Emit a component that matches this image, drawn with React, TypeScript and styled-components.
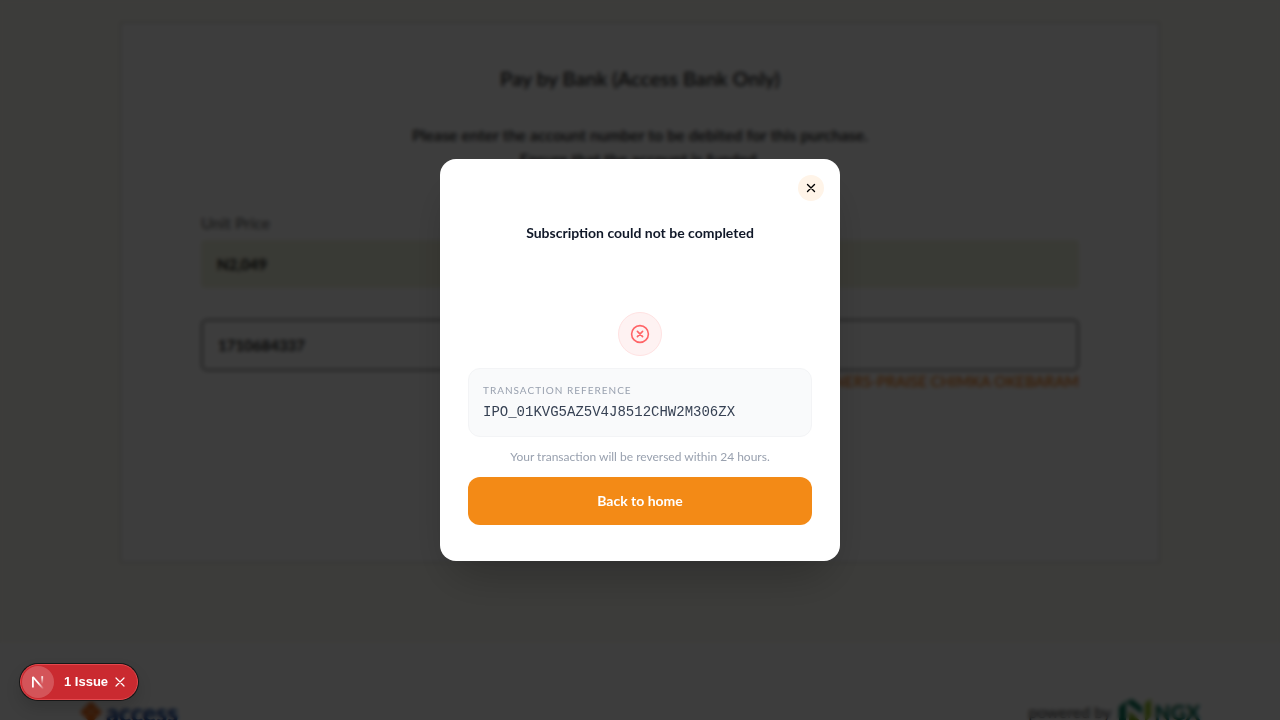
import React from "react";
import styled, { createGlobalStyle } from "styled-components";

const GlobalStyle = createGlobalStyle`
  * { box-sizing: border-box; }
  body {
    margin: 0;
    overflow: hidden;
    background: #fff;
    color: #101828;
    font-family: "Lato", "Liberation Sans", sans-serif;
  }
  button, input { font-family: inherit; }
  h1, h2, p { margin: 0; }
`;

const Main = styled.main`
  background: #fbfaf2;
  padding: 22px 120px 80px;
`;

const PayCard = styled.section`
  min-height: 541px;
  padding: 40px 80px;
  background: #fff;
  border: 1px solid #c6c5bd;
`;

const PayTitle = styled.h1`
  margin-bottom: 30px;
  font-size: 20px;
  line-height: 30px;
  font-weight: 600;
  text-align: center;
  color: #222;
`;

const Lead = styled.p`
  margin-bottom: 40px;
  font-size: 16px;
  line-height: 24px;
  font-weight: 600;
  text-align: center;
  color: #222;
`;

const Form = styled.form`
  display: flex;
  flex-direction: column;
`;

const Label = styled.label`
  font-size: 16px;
  line-height: 24px;
  color: #555;
  margin-bottom: 5px;
`;

const PriceInput = styled.input`
  width: 100%;
  height: 48px;
  padding: 0 16px;
  border: 0;
  border-radius: 4px;
  background: #eff1dc;
  font-size: 15px;
  font-weight: 700;
  color: #111;
  margin-bottom: 31px;
`;

const AccountInput = styled.input`
  width: 100%;
  height: 52px;
  padding: 0 15px;
  border: 2px solid #888;
  border-radius: 6px;
  background: #fff;
  font-size: 15px;
  font-weight: 700;
  color: #222;
`;

const AccountName = styled.p`
  font-size: 15px;
  line-height: 20px;
  font-weight: 600;
  text-align: right;
  color: #f07a10;
`;

const Footer = styled.footer`
  display: flex;
  align-items: center;
  justify-content: space-between;
  padding: 56px 80px 40px;
`;

const Brand = styled.div`
  display: flex;
  align-items: center;
  gap: 4px;
  font-size: 25px;
  line-height: 24px;
  font-weight: 900;
  color: #0a3a8c;
`;

const Powered = styled.div`
  display: flex;
  align-items: center;
  gap: 8px;
  font-size: 16px;
  line-height: 24px;
  color: #333;
`;

const Exchange = styled.strong`
  font-size: 21px;
  font-weight: 900;
  color: #006b4f;
  margin-left: -6px;
`;

const Overlay = styled.div`
  position: fixed;
  inset: 0;
  display: flex;
  align-items: center;
  justify-content: center;
  background: rgba(0, 0, 0, 0.76);
  backdrop-filter: blur(2px);
`;

const Dialog = styled.div`
  position: relative;
  width: 400px;
  max-width: 100%;
  padding: 60px 28px 36px;
  display: flex;
  flex-direction: column;
  align-items: center;
  background: #fff;
  border-radius: 16px;
  box-shadow: 0 24px 48px -12px rgba(0, 0, 0, 0.25);
`;

const CloseButton = styled.button`
  position: absolute;
  top: 16px;
  right: 16px;
  display: flex;
  align-items: center;
  justify-content: center;
  width: 26px;
  height: 26px;
  padding: 0;
  border: 0;
  border-radius: 50%;
  background: #fff4e8;
  color: #000;
`;

const DialogTitle = styled.h2`
  font-size: 14px;
  line-height: 28px;
  font-weight: 700;
  text-align: center;
  color: #101828;
  margin-bottom: 65px;
`;

const StatusIcon = styled.div`
  display: flex;
  align-items: center;
  justify-content: center;
  width: 44px;
  height: 44px;
  border: 1px solid #ffe2e2;
  border-radius: 50%;
  background: #fef2f2;
  color: #ff6467;
  margin-bottom: 12px;
`;

const ReferenceBox = styled.dl`
  width: 100%;
  margin: 0 0 12px;
  padding: 14px 14px 12px;
  border: 1px solid #f3f4f6;
  border-radius: 12px;
  background: #f9fafb;
`;

const ReferenceLabel = styled.dt`
  font-size: 10px;
  line-height: 15px;
  letter-spacing: 1px;
  text-transform: uppercase;
  color: #99a1af;
`;

const ReferenceValue = styled.dd`
  margin: 3px 0 0;
  font-family: "Liberation Mono", monospace;
  font-size: 14px;
  line-height: 23px;
  color: #364153;
`;

const Note = styled.p`
  font-size: 12px;
  line-height: 16px;
  text-align: center;
  color: #99a1af;
  margin-bottom: 12px;
`;

const HomeButton = styled.button`
  width: 100%;
  height: 48px;
  padding: 0 0 2px;
  border: 0;
  border-radius: 12px;
  background: #f38a16;
  color: #fff;
  font-size: 14px;
  font-weight: 700;
`;

const IssueBadge = styled.div`
  position: fixed;
  left: 20px;
  bottom: 20px;
  display: flex;
  align-items: center;
  height: 36px;
  padding: 0 9px 0 1px;
  border: 1px solid #e5484d;
  border-radius: 18px;
  background: #ca2a30;
  box-shadow: 0 0 0 1px #171717, 0 8px 16px rgba(0, 0, 0, 0.14);
  color: #fff;
`;

const BadgeLogo = styled.button`
  display: flex;
  align-items: center;
  justify-content: center;
  width: 32px;
  height: 32px;
  padding: 0;
  border: 0;
  border-radius: 50%;
  background: rgba(255, 255, 255, 0.2);
`;

const BadgeText = styled.button`
  padding: 0 4px 0 10px;
  border: 0;
  background: none;
  color: #fff;
  && { font-family: "Liberation Sans", sans-serif; }
  font-size: 13px;
  line-height: 20px;
  font-weight: 700;
`;

const BadgeClose = styled.button`
  display: flex;
  padding: 2px;
  border: 0;
  background: none;
  color: #fff;
`;

function Cross({ size, reach, weight }: { size: number; reach: number; weight: number }) {
  const a = size / 2 - reach;
  const b = size / 2 + reach;
  return (
    <svg width={size} height={size} viewBox={`0 0 ${size} ${size}`} fill="none" aria-hidden="true">
      <path d={`M${a} ${a}L${b} ${b}M${b} ${a}L${a} ${b}`} stroke="currentColor" strokeWidth={weight} strokeLinecap="round" />
    </svg>
  );
}

function FailedIcon() {
  return (
    <svg width="22" height="22" viewBox="0 0 22 22" fill="none" stroke="currentColor" strokeWidth="1.6" strokeLinecap="round" aria-hidden="true">
      <circle cx="11" cy="11" r="8.4" />
      <path d="M8.4 8.4l5.2 5.2M13.6 8.4l-5.2 5.2" />
    </svg>
  );
}

function NextLogo() {
  return (
    <svg width="16" height="16" viewBox="0 0 16 16" fill="none" aria-hidden="true">
      <defs>
        <linearGradient id="diag" x1="9" y1="9" x2="13.6" y2="14.8" gradientUnits="userSpaceOnUse">
          <stop stopColor="#fff" />
          <stop offset="1" stopColor="#fff" stopOpacity="0" />
        </linearGradient>
        <linearGradient id="stem" x1="12" y1="2" x2="12" y2="10" gradientUnits="userSpaceOnUse">
          <stop stopColor="#fff" />
          <stop offset="1" stopColor="#fff" stopOpacity="0" />
        </linearGradient>
      </defs>
      <path d="M2.9 13.6V2.8" stroke="#fff" strokeWidth="1.8" />
      <path d="M3 3l10.4 12" stroke="url(#diag)" strokeWidth="1.9" />
      <path d="M12.2 2.2v8" stroke="url(#stem)" strokeWidth="1.8" />
    </svg>
  );
}

function AccessMark() {
  return (
    <svg width="22" height="22" viewBox="0 0 22 22" aria-hidden="true">
      <path fill="#ef6b1a" d="M11 0l6 6-6 5-6-5zM5 6l5 5-5 5-5-5zM17 6l5 5-5 5-5-5zM11 11l6 5-6 6-6-6z" />
    </svg>
  );
}

function NgxMark() {
  return (
    <svg width="33" height="26" viewBox="0 0 33 26" aria-hidden="true">
      <path fill="#007052" d="M0 8l7-6v22l-7 2z" />
      <path fill="#007052" d="M7 3l6-3 10 8v7z" />
      <path fill="#78a51a" d="M10 12l14 12H10z" />
      <path fill="#8ab81c" d="M26 4l6-4v17l-6 6z" />
    </svg>
  );
}

export default function App() {
  return (
    <>
      <GlobalStyle />
      <Main>
        <PayCard>
          <PayTitle>Pay by Bank (Access Bank Only)</PayTitle>
          <Lead>
            Please enter the account number to be debited for this purchase.
            <br />
            Ensure that the account is funded.
          </Lead>
          <Form>
            <Label htmlFor="price">Unit Price</Label>
            <PriceInput id="price" readOnly value="N2,049" />
            <AccountInput aria-label="Account number" readOnly value="1710684337" />
            <AccountName>NERS-PRAISE CHIMKA OKEBARAM</AccountName>
          </Form>
        </PayCard>
      </Main>
      <Footer>
        <Brand>
          <AccessMark />
          access
        </Brand>
        <Powered>
          powered by
          <NgxMark />
          <Exchange>NGX</Exchange>
        </Powered>
      </Footer>

      <Overlay>
        <Dialog role="dialog" aria-modal="true" aria-labelledby="dialog-title">
          <CloseButton type="button" aria-label="Close">
            <Cross size={12} reach={3.5} weight={1.4} />
          </CloseButton>
          <DialogTitle id="dialog-title">Subscription could not be completed</DialogTitle>
          <StatusIcon>
            <FailedIcon />
          </StatusIcon>
          <ReferenceBox>
            <ReferenceLabel>Transaction Reference</ReferenceLabel>
            <ReferenceValue>IPO_01KVG5AZ5V4J8512CHW2M306ZX</ReferenceValue>
          </ReferenceBox>
          <Note>Your transaction will be reversed within 24 hours.</Note>
          <HomeButton type="button">Back to home</HomeButton>
        </Dialog>
      </Overlay>

      <IssueBadge>
        <BadgeLogo type="button" aria-label="Open developer tools">
          <NextLogo />
        </BadgeLogo>
        <BadgeText type="button">1 Issue</BadgeText>
        <BadgeClose type="button" aria-label="Dismiss issues">
          <Cross size={12} reach={4} weight={1.2} />
        </BadgeClose>
      </IssueBadge>
    </>
  );
}
